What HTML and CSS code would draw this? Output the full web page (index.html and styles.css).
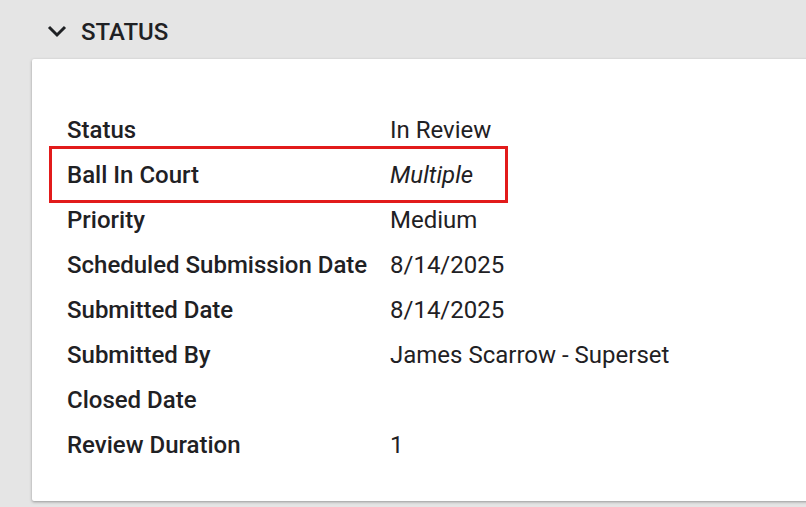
FILE: index.html
```html
<!DOCTYPE html>
<html>
<head>
<meta charset="utf-8">
<link rel="stylesheet" href="styles.css">
</head>
<body>
<div class="page">
  <div class="section-header">
    <svg class="chevron" width="20" height="14" viewBox="0 0 20 14"><polyline points="2,3 10,11 18,3" fill="none" stroke="#1f2124" stroke-width="3"/></svg>
    <span class="section-title">STATUS</span>
  </div>
  <div class="card">
    <div class="rows">
      <div class="row"><div class="label">Status</div><div class="value">In Review</div></div>
      <div class="row highlight"><div class="label">Ball In Court</div><div class="value italic">Multiple</div><div class="mark"></div></div>
      <div class="row"><div class="label">Priority</div><div class="value">Medium</div></div>
      <div class="row"><div class="label">Scheduled Submission Date</div><div class="value">8/14/2025</div></div>
      <div class="row"><div class="label">Submitted Date</div><div class="value">8/14/2025</div></div>
      <div class="row"><div class="label">Submitted By</div><div class="value">James Scarrow - Superset</div></div>
      <div class="row"><div class="label">Closed Date</div><div class="value"></div></div>
      <div class="row"><div class="label">Review Duration</div><div class="value">1</div></div>
    </div>
  </div>
</div>
</body>
</html>
```
FILE: styles.css
```css
html, body {
  margin: 0;
  padding: 0;
  background: #e5e5e5;
  font-family: Roboto, "Liberation Sans", sans-serif;
  color: #1f2124;
  overflow: hidden;
}
.page {
  width: 806px;
  height: 507px;
}
.section-header {
  display: flex;
  align-items: center;
  height: 59px;
  padding-left: 47px;
  box-sizing: border-box;
}
.chevron {
  margin-right: 14px;
  margin-top: 2px;
}
.section-title {
  font-size: 24px;
  font-weight: 500;
  line-height: 1;
  margin-top: 4px;
}
.card {
  margin-left: 32px;
  width: 800px;
  height: 442px;
  background: #ffffff;
  border-radius: 2px 0 0 2px;
  box-shadow: 0 1px 3px rgba(0,0,0,0.35);
  box-sizing: border-box;
  padding: 48px 0 0 35px;
}
.rows {
  display: flex;
  flex-direction: column;
}
.row {
  display: grid;
  grid-template-columns: 323px 1fr;
  height: 45px;
  align-items: center;
  font-size: 24px;
  line-height: 28px;
  position: relative;
}
.label {
  font-weight: 500;
}
.value {
  font-weight: 400;
}
.italic {
  font-style: italic;
}
.mark {
  position: absolute;
  left: -18px;
  top: -6px;
  width: 459px;
  height: 57px;
  box-sizing: border-box;
  border: 3.5px solid #e21b1b;
}
```
